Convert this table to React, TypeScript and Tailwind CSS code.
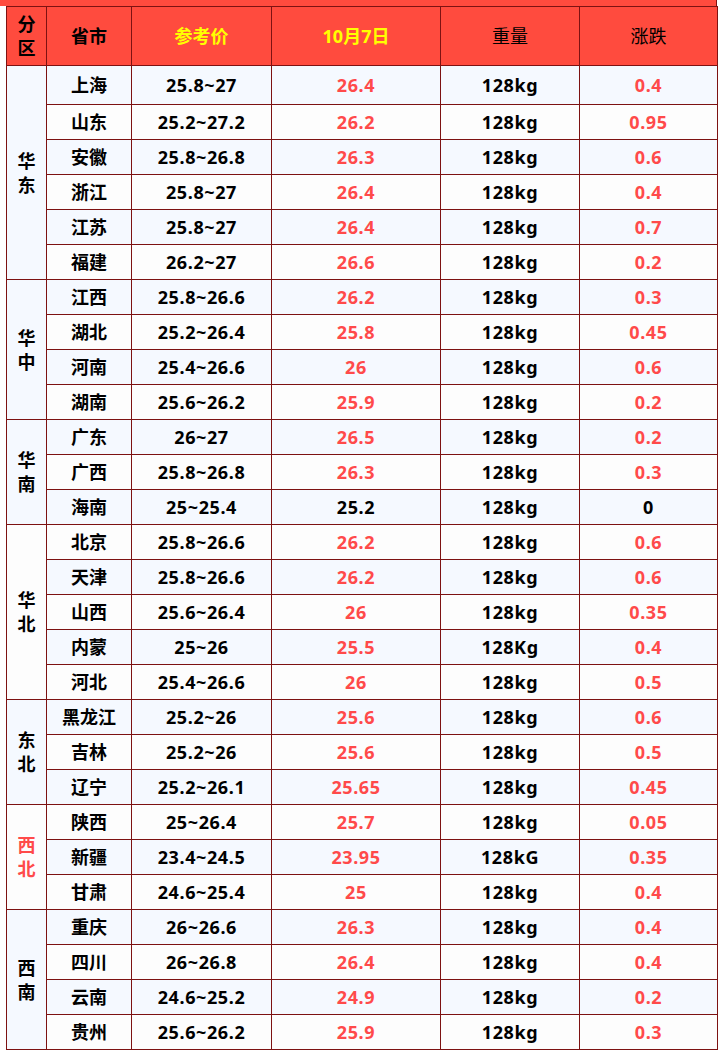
type Row = { city: string; range: string; price: string; weight: string; change: string }
type Group = { region: string; regionRed?: boolean; rows: Row[] }

const groups: Group[] = [
  {
    region: '华东',
    rows: [
      { city: '上海', range: '25.8~27', price: '26.4', weight: '128kg', change: '0.4' },
      { city: '山东', range: '25.2~27.2', price: '26.2', weight: '128kg', change: '0.95' },
      { city: '安徽', range: '25.8~26.8', price: '26.3', weight: '128kg', change: '0.6' },
      { city: '浙江', range: '25.8~27', price: '26.4', weight: '128kg', change: '0.4' },
      { city: '江苏', range: '25.8~27', price: '26.4', weight: '128kg', change: '0.7' },
      { city: '福建', range: '26.2~27', price: '26.6', weight: '128kg', change: '0.2' },
    ],
  },
  {
    region: '华中',
    rows: [
      { city: '江西', range: '25.8~26.6', price: '26.2', weight: '128kg', change: '0.3' },
      { city: '湖北', range: '25.2~26.4', price: '25.8', weight: '128kg', change: '0.45' },
      { city: '河南', range: '25.4~26.6', price: '26', weight: '128kg', change: '0.6' },
      { city: '湖南', range: '25.6~26.2', price: '25.9', weight: '128kg', change: '0.2' },
    ],
  },
  {
    region: '华南',
    rows: [
      { city: '广东', range: '26~27', price: '26.5', weight: '128kg', change: '0.2' },
      { city: '广西', range: '25.8~26.8', price: '26.3', weight: '128kg', change: '0.3' },
      { city: '海南', range: '25~25.4', price: '25.2', weight: '128kg', change: '0' },
    ],
  },
  {
    region: '华北',
    rows: [
      { city: '北京', range: '25.8~26.6', price: '26.2', weight: '128kg', change: '0.6' },
      { city: '天津', range: '25.8~26.6', price: '26.2', weight: '128kg', change: '0.6' },
      { city: '山西', range: '25.6~26.4', price: '26', weight: '128kg', change: '0.35' },
      { city: '内蒙', range: '25~26', price: '25.5', weight: '128Kg', change: '0.4' },
      { city: '河北', range: '25.4~26.6', price: '26', weight: '128kg', change: '0.5' },
    ],
  },
  {
    region: '东北',
    rows: [
      { city: '黑龙江', range: '25.2~26', price: '25.6', weight: '128kg', change: '0.6' },
      { city: '吉林', range: '25.2~26', price: '25.6', weight: '128kg', change: '0.5' },
      { city: '辽宁', range: '25.2~26.1', price: '25.65', weight: '128kg', change: '0.45' },
    ],
  },
  {
    region: '西北',
    regionRed: true,
    rows: [
      { city: '陕西', range: '25~26.4', price: '25.7', weight: '128kg', change: '0.05' },
      { city: '新疆', range: '23.4~24.5', price: '23.95', weight: '128kG', change: '0.35' },
      { city: '甘肃', range: '24.6~25.4', price: '25', weight: '128kg', change: '0.4' },
    ],
  },
  {
    region: '西南',
    rows: [
      { city: '重庆', range: '26~26.6', price: '26.3', weight: '128kg', change: '0.4' },
      { city: '四川', range: '26~26.8', price: '26.4', weight: '128kg', change: '0.4' },
      { city: '云南', range: '24.6~25.2', price: '24.9', weight: '128kg', change: '0.2' },
      { city: '贵州', range: '25.6~26.2', price: '25.9', weight: '128kg', change: '0.3' },
    ],
  },
]

const cell = 'border border-[#7d1212] text-center align-middle p-0'
const num = `${cell} tracking-[0.6px]`
const redText = 'text-[#ff4a4a]'

function valueColor(v: string) {
  // unchanged values (海南) are shown in black
  return v === '0' || v === '25.2' ? 'text-black' : redText
}

export default function App() {
  let index = 0

  return (
    <div
      className="w-[726px] h-[1054px] bg-white overflow-hidden"
      style={{ fontFamily: '"Noto Sans", "Noto Sans CJK SC", sans-serif' }}
    >
      <div className="w-[717px] h-[6px] bg-[#ff4b3e] border-r border-[#7d1212]" />
      <table className="ml-[6px] w-[711px] table-fixed border-collapse text-[18px] font-bold leading-none text-black">
        <colgroup>
          <col className="w-[40px]" />
          <col className="w-[85px]" />
          <col className="w-[140px]" />
          <col className="w-[169px]" />
          <col className="w-[139px]" />
          <col className="w-[138px]" />
        </colgroup>
        <thead>
          <tr className="h-[59px] bg-[#ff4b3e]">
            <th className={`${cell} leading-[24px]`}>
              分<br />区
            </th>
            <th className={cell}>省市</th>
            <th className={`${cell} text-[#ffff00]`}>参考价</th>
            <th className={`${cell} text-[#ffff00]`}>10月7日</th>
            <th className={`${cell} font-normal`}>重量</th>
            <th className={`${cell} font-normal`}>涨跌</th>
          </tr>
        </thead>
        <tbody>
          {groups.map((g) =>
            g.rows.map((r, i) => {
              const bg = index % 2 === 0 ? 'bg-[#f5f9ff]' : 'bg-[#fdfdfd]'
              const height = index === 0 ? 'h-[39px]' : 'h-[35px]'
              index++
              return (
                <tr key={r.city} className={`${height} ${bg}`}>
                  {i === 0 && (
                    <td
                      rowSpan={g.rows.length}
                      className={`${cell} leading-[24px] ${g.regionRed ? redText : ''}`}
                    >
                      {g.region[0]}
                      <br />
                      {g.region[1]}
                    </td>
                  )}
                  <td className={cell}>{r.city}</td>
                  <td className={num}>{r.range}</td>
                  <td className={`${num} ${valueColor(r.price)}`}>{r.price}</td>
                  <td className={num}>{r.weight}</td>
                  <td className={`${num} ${valueColor(r.change)}`}>{r.change}</td>
                </tr>
              )
            })
          )}
        </tbody>
      </table>
    </div>
  )
}
